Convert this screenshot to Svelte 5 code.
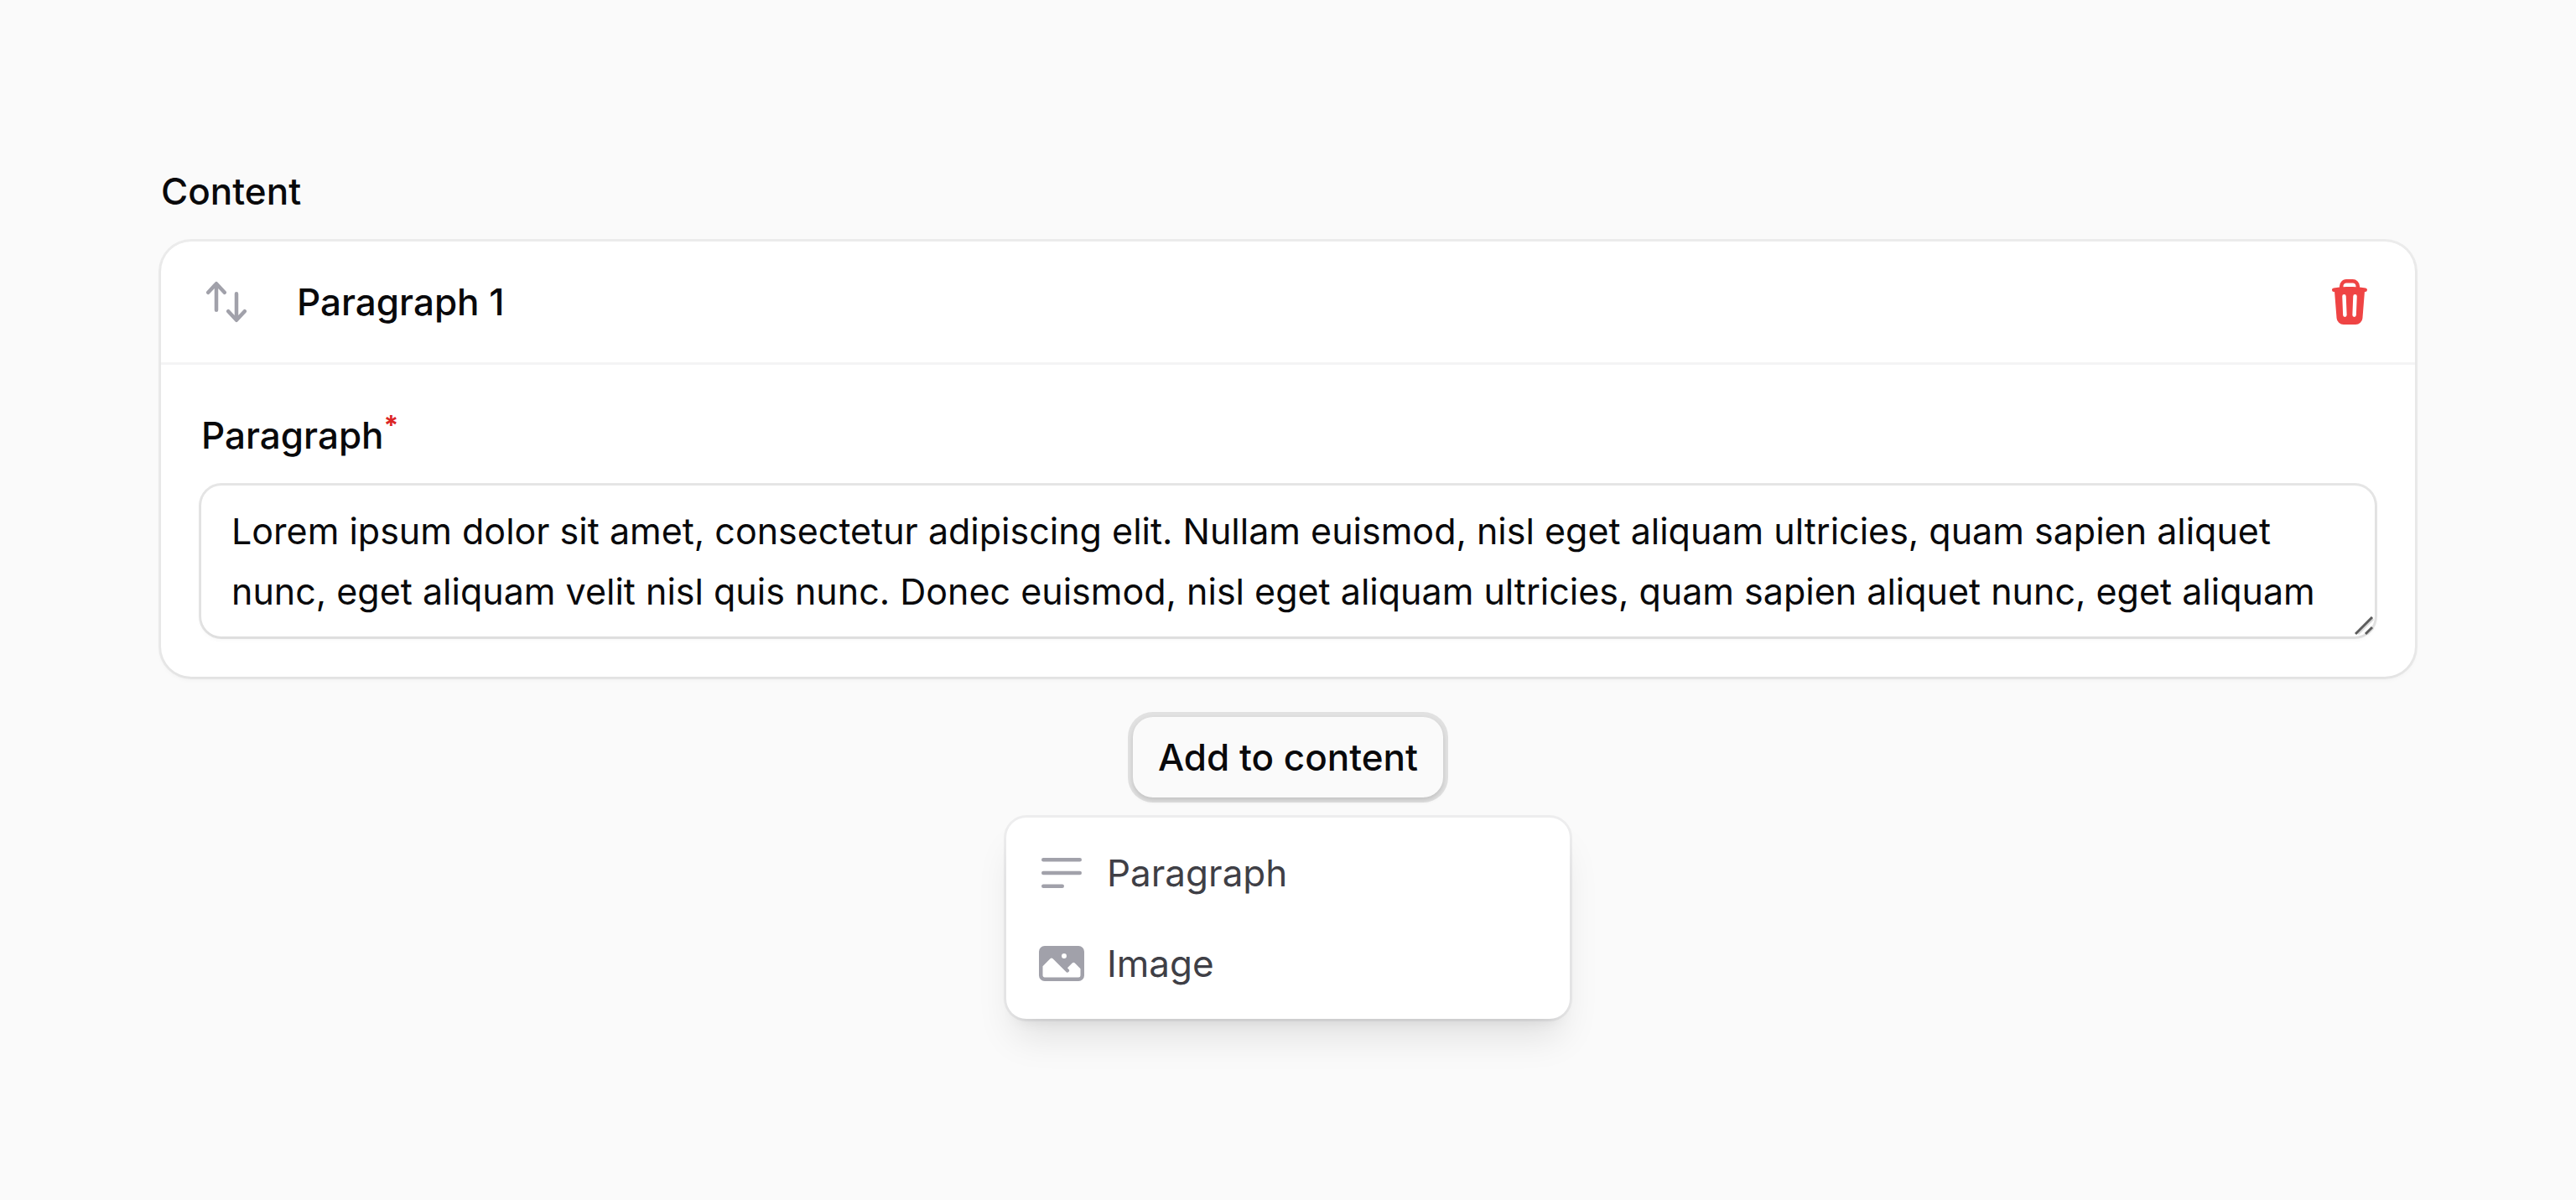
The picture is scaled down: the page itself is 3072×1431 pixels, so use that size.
<script>
  let paragraph = $state(
    'Lorem ipsum dolor sit amet, consectetur adipiscing elit. Nullam euismod, nisl eget aliquam ultricies, quam sapien aliquet nunc, eget aliquam velit nisl quis nunc. Donec euismod, nisl eget aliquam ultricies, quam sapien aliquet nunc, eget aliquam'
  );

  const icons = {
    sort: 'M2.24 6.8a.75.75 0 0 0 1.06-.04l1.95-2.1v8.59a.75.75 0 0 0 1.5 0V4.66l1.95 2.1a.75.75 0 1 0 1.1-1.02l-3.25-3.5a.75.75 0 0 0-1.1 0L2.2 5.74a.75.75 0 0 0 .04 1.06Zm8 6.4a.75.75 0 0 0-.04 1.06l3.25 3.5a.75.75 0 0 0 1.1 0l3.25-3.5a.75.75 0 1 0-1.1-1.02l-1.95 2.1V6.75a.75.75 0 0 0-1.5 0v8.59l-1.95-2.1a.75.75 0 0 0-1.06-.04Z',
    trash:
      'M8.75 1A2.75 2.75 0 0 0 6 3.75v.443c-.795.077-1.584.176-2.365.298a.75.75 0 1 0 .23 1.482l.149-.022.841 10.518A2.75 2.75 0 0 0 7.596 19h4.807a2.75 2.75 0 0 0 2.742-2.53l.841-10.52.149.023a.75.75 0 0 0 .23-1.482A41.03 41.03 0 0 0 14 4.193V3.75A2.75 2.75 0 0 0 11.25 1h-2.5ZM10 4c.84 0 1.673.025 2.5.075V3.75c0-.69-.56-1.25-1.25-1.25h-2.5c-.69 0-1.25.56-1.25 1.25v.325C8.327 4.025 9.16 4 10 4ZM8.58 7.72a.75.75 0 0 0-1.5.06l.3 7.5a.75.75 0 1 0 1.5-.06l-.3-7.5Zm4.34.06a.75.75 0 1 0-1.5-.06l-.3 7.5a.75.75 0 1 0 1.5.06l.3-7.5Z',
    lines:
      'M2 4.75A.75.75 0 0 1 2.75 4h14.5a.75.75 0 0 1 0 1.5H2.75A.75.75 0 0 1 2 4.75Zm0 10.5a.75.75 0 0 1 .75-.75h7.5a.75.75 0 0 1 0 1.5h-7.5a.75.75 0 0 1-.75-.75ZM2 10a.75.75 0 0 1 .75-.75h14.5a.75.75 0 0 1 0 1.5H2.75A.75.75 0 0 1 2 10Z',
    photo:
      'M1 5.25A2.25 2.25 0 0 1 3.25 3h13.5A2.25 2.25 0 0 1 19 5.25v9.5A2.25 2.25 0 0 1 16.75 17H3.25A2.25 2.25 0 0 1 1 14.75v-9.5Zm1.5 5.81v3.69c0 .414.336.75.75.75h13.5a.75.75 0 0 0 .75-.75v-2.69l-2.22-2.219a.75.75 0 0 0-1.06 0l-1.91 1.909.47.47a.75.75 0 1 1-1.06 1.06L6.53 8.091a.75.75 0 0 0-1.06 0l-2.97 2.97ZM12 7a1 1 0 1 1-2 0 1 1 0 0 1 2 0Z'
  };

  const blocks = [
    { label: 'Paragraph', icon: icons.lines },
    { label: 'Image', icon: icons.photo }
  ];
</script>

{#snippet icon(d)}
  <svg class="icon" viewBox="0 0 20 20" fill="currentColor" aria-hidden="true">
    <path fill-rule="evenodd" clip-rule="evenodd" {d} />
  </svg>
{/snippet}

<main class="builder">
  <h2 class="title">Content</h2>

  <section class="card">
    <header class="card-head">
      <button type="button" class="icon-button" aria-label="Move">{@render icon(icons.sort)}</button>
      <h3 class="card-title">Paragraph 1</h3>
      <button type="button" class="icon-button danger" aria-label="Delete">{@render icon(icons.trash)}</button>
    </header>
    <div class="card-body">
      <label class="label" for="paragraph">Paragraph<sup class="required">*</sup></label>
      <div class="field">
        <textarea id="paragraph" rows="2" required spellcheck="false" bind:value={paragraph}></textarea>
        <svg class="grip" viewBox="0 0 24 24" aria-hidden="true">
          <path class="grip-shade" d="M4 21 22 3M15 21l7-7" />
          <path d="M1 21 21 1M13 21l8-8" />
        </svg>
      </div>
    </div>
  </section>

  <div class="adder">
    <button type="button" class="add" aria-haspopup="menu" aria-expanded="true">Add to content</button>
    <div class="menu" role="menu">
      {#each blocks as block}
        <button type="button" class="menu-item" role="menuitem">
          {@render icon(block.icon)}
          <span>{block.label}</span>
        </button>
      {/each}
    </div>
  </div>
</main>

<style>
  :global(body) {
    background: #fafafa;
  }

  .builder {
    display: flex;
    flex-direction: column;
    padding: 192px;
    color: #09090b;
    font-family: Inter, 'Liberation Sans', sans-serif;
    font-size: 44px;
    line-height: 72px;
  }

  button,
  textarea {
    margin: 0;
    border: 0;
    background: none;
    color: inherit;
    font: inherit;
  }

  button {
    padding: 0;
    cursor: pointer;
  }

  .title,
  .card-title {
    margin: 0;
    font-size: inherit;
    font-weight: 500;
  }

  .title {
    margin-bottom: 24px;
  }

  .icon {
    display: block;
    flex: none;
    width: 60px;
    height: 60px;
    color: #a1a1aa;
  }

  .card {
    border-radius: 36px;
    background: #fff;
    box-shadow:
      0 0 0 3px rgb(9 9 11 / 0.06),
      0 3px 6px rgb(0 0 0 / 0.05);
  }

  .card-head {
    display: flex;
    align-items: center;
    gap: 54px;
    padding: 36px 48px;
  }

  .card-title {
    flex: 1;
  }

  .danger .icon {
    color: #ef4444;
  }

  .card-body {
    display: flex;
    flex-direction: column;
    gap: 24px;
    padding: 48px;
    border-top: 3px solid #f4f4f5;
  }

  .label {
    font-weight: 500;
  }

  .required {
    color: #dc2626;
    font-size: 32px;
    font-weight: 700;
    line-height: 0;
  }

  .field {
    position: relative;
    display: flex;
  }

  textarea {
    flex: 1;
    padding: 18px 36px;
    border-radius: 24px;
    outline: none;
    overflow: hidden;
    resize: none;
    font-size: 43px;
    box-shadow:
      0 0 0 3px rgb(9 9 11 / 0.1),
      0 3px 6px rgb(0 0 0 / 0.05);
  }

  .grip {
    position: absolute;
    right: 0;
    bottom: 0;
    width: 24px;
    height: 24px;
    fill: none;
    stroke: #5c5c5c;
    stroke-width: 3;
  }

  .grip-shade {
    stroke: #dcdcdc;
  }

  .adder {
    display: flex;
    flex-direction: column;
    align-items: center;
    gap: 24px;
    margin-top: 48px;
  }

  .add {
    padding: 12px 30px;
    border-radius: 24px;
    font-weight: 500;
    box-shadow:
      0 0 0 6px rgb(9 9 11 / 0.1),
      0 3px 6px rgb(0 0 0 / 0.15);
  }

  .menu {
    box-sizing: border-box;
    width: 672px;
    padding: 12px;
    border-radius: 24px;
    background: #fff;
    box-shadow:
      0 0 0 3px rgb(9 9 11 / 0.05),
      0 30px 45px -9px rgb(0 0 0 / 0.1),
      0 12px 18px -12px rgb(0 0 0 / 0.1);
  }

  .menu-item {
    display: flex;
    align-items: center;
    gap: 24px;
    width: 100%;
    padding: 18px 24px;
    color: #3f3f46;
    text-align: left;
  }
</style>
